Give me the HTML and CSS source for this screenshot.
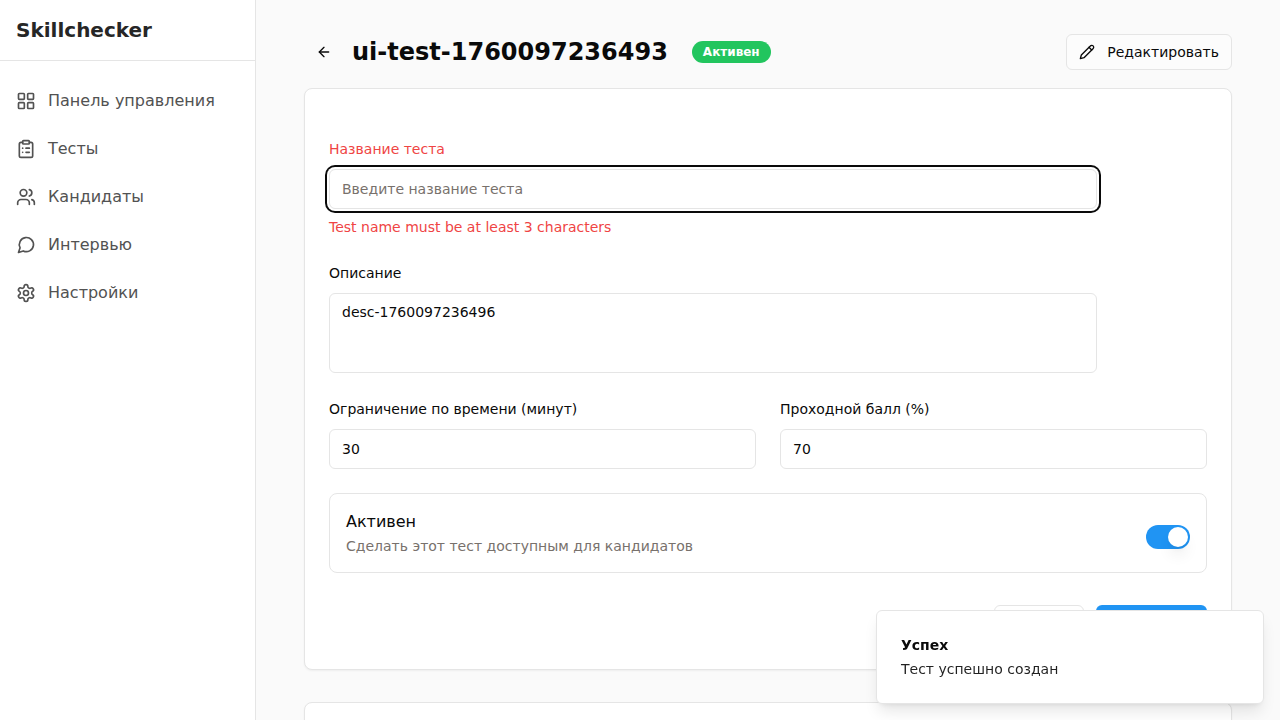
FILE: index.html
```html
<!DOCTYPE html>
<html lang="ru">
<head>
<meta charset="utf-8">
<meta name="viewport" content="width=device-width, initial-scale=1">
<title>Skillchecker</title>
<link rel="stylesheet" href="styles.css">
</head>
<body>
<div class="app">
  <aside class="sidebar">
    <div class="brand">Skillchecker</div>
    <nav class="nav">
      <a class="nav-link" href="#dashboard">
        <svg class="icon icon-md" viewBox="0 0 24 24" aria-hidden="true"><rect width="7" height="7" x="3" y="3" rx="1"/><rect width="7" height="7" x="14" y="3" rx="1"/><rect width="7" height="7" x="14" y="14" rx="1"/><rect width="7" height="7" x="3" y="14" rx="1"/></svg>
        <span>Панель управления</span>
      </a>
      <a class="nav-link" href="#tests">
        <svg class="icon icon-md" viewBox="0 0 24 24" aria-hidden="true"><rect width="8" height="4" x="8" y="2" rx="1" ry="1"/><path d="M16 4h2a2 2 0 0 1 2 2v14a2 2 0 0 1-2 2H6a2 2 0 0 1-2-2V6a2 2 0 0 1 2-2h2"/><path d="M12 11h4"/><path d="M12 16h4"/><path d="M8 11h.01"/><path d="M8 16h.01"/></svg>
        <span>Тесты</span>
      </a>
      <a class="nav-link" href="#candidates">
        <svg class="icon icon-md" viewBox="0 0 24 24" aria-hidden="true"><path d="M16 21v-2a4 4 0 0 0-4-4H6a4 4 0 0 0-4 4v2"/><circle cx="9" cy="7" r="4"/><path d="M22 21v-2a4 4 0 0 0-3-3.87"/><path d="M16 3.13a4 4 0 0 1 0 7.75"/></svg>
        <span>Кандидаты</span>
      </a>
      <a class="nav-link" href="#interviews">
        <svg class="icon icon-md" viewBox="0 0 24 24" aria-hidden="true"><path d="m3 21 1.9-5.7a8.5 8.5 0 1 1 3.8 3.8z"/></svg>
        <span>Интервью</span>
      </a>
      <a class="nav-link" href="#settings">
        <svg class="icon icon-md" viewBox="0 0 24 24" aria-hidden="true"><path d="M12.22 2h-.44a2 2 0 0 0-2 2v.18a2 2 0 0 1-1 1.73l-.43.25a2 2 0 0 1-2 0l-.15-.08a2 2 0 0 0-2.73.73l-.22.38a2 2 0 0 0 .73 2.73l.15.1a2 2 0 0 1 1 1.72v.51a2 2 0 0 1-1 1.74l-.15.09a2 2 0 0 0-.73 2.73l.22.38a2 2 0 0 0 2.73.73l.15-.08a2 2 0 0 1 2 0l.43.25a2 2 0 0 1 1 1.73V20a2 2 0 0 0 2 2h.44a2 2 0 0 0 2-2v-.18a2 2 0 0 1 1-1.73l.43-.25a2 2 0 0 1 2 0l.15.08a2 2 0 0 0 2.73-.73l.22-.39a2 2 0 0 0-.73-2.73l-.15-.08a2 2 0 0 1-1-1.74v-.5a2 2 0 0 1 1-1.74l.15-.09a2 2 0 0 0 .73-2.73l-.22-.38a2 2 0 0 0-2.73-.73l-.15.08a2 2 0 0 1-2 0l-.43-.25a2 2 0 0 1-1-1.73V4a2 2 0 0 0-2-2z"/><circle cx="12" cy="12" r="3"/></svg>
        <span>Настройки</span>
      </a>
    </nav>
  </aside>

  <main class="main">
    <header class="page-header">
      <div class="page-title">
        <button class="back" type="button" aria-label="Назад">
          <svg class="icon icon-sm" viewBox="0 0 24 24" aria-hidden="true"><path d="m12 19-7-7 7-7"/><path d="M19 12H5"/></svg>
        </button>
        <h1 class="title">ui-test-1760097236493</h1>
        <span class="badge">Активен</span>
      </div>
      <button class="button button-outline button-edit" type="button">
        <svg class="icon icon-sm" viewBox="0 0 24 24" aria-hidden="true"><path d="M17 3a2.85 2.83 0 1 1 4 4L7.5 20.5 2 22l1.5-5.5Z"/><path d="m15 5 4 4"/></svg>
        <span>Редактировать</span>
      </button>
    </header>

    <section class="card">
      <form class="form">
        <div class="field field-narrow">
          <label class="label label-error" for="name">Название теста</label>
          <input class="input input-active" id="name" type="text" placeholder="Введите название теста" aria-invalid="true" aria-describedby="name-error">
          <p class="error" id="name-error">Test name must be at least 3 characters</p>
        </div>
        <div class="field field-narrow">
          <label class="label" for="description">Описание</label>
          <textarea class="input textarea" id="description">desc-1760097236496</textarea>
        </div>
        <div class="field-row">
          <div class="field">
            <label class="label" for="time">Ограничение по времени (минут)</label>
            <input class="input" id="time" type="text" inputmode="numeric" value="30">
          </div>
          <div class="field">
            <label class="label" for="score">Проходной балл (%)</label>
            <input class="input" id="score" type="text" inputmode="numeric" value="70">
          </div>
        </div>
        <div class="option">
          <div class="option-text">
            <label class="option-title" for="active">Активен</label>
            <p class="option-note" id="active-note">Сделать этот тест доступным для кандидатов</p>
          </div>
          <div class="option-control">
            <input class="switch" id="active" type="checkbox" role="switch" aria-describedby="active-note" checked>
          </div>
        </div>
        <div class="actions">
          <button class="button button-outline button-white" type="button">Отмена</button>
          <button class="button button-primary" type="submit">Сохранить</button>
        </div>
      </form>
    </section>

    <section class="card card-next"></section>
  </main>
</div>

<div class="toast" role="status">
  <div class="toast-title">Успех</div>
  <div class="toast-text">Тест успешно создан</div>
</div>
</body>
</html>
```

FILE: styles.css
```css
:root {
  --ink: #0a0a0a;
  --border: #e5e5e5;
  --muted: #78716c;
  --red: #ef4444;
  --blue: #2094f3;
  --page: #fafafa;
}

*,
*::before {
  box-sizing: border-box;
}

body {
  margin: 0;
  font-family: "DejaVu Sans", sans-serif;
  font-size: 14px;
  line-height: 20px;
  color: var(--ink);
  background: var(--page);
}

h1,
p {
  margin: 0;
}

button,
input,
textarea {
  font: inherit;
  color: inherit;
}

.app {
  display: flex;
  height: 100vh;
}

.icon {
  flex: none;
  fill: none;
  stroke: currentColor;
  stroke-width: 2;
  stroke-linecap: round;
  stroke-linejoin: round;
}

.icon-sm {
  width: 16px;
  height: 16px;
}

.icon-md {
  width: 20px;
  height: 20px;
}

/* Sidebar */

.sidebar {
  flex: none;
  width: 256px;
  background: #fff;
  border-right: 1px solid var(--border);
}

.brand {
  padding: 16px;
  border-bottom: 1px solid var(--border);
  font-size: 20px;
  line-height: 28px;
  font-weight: 700;
  color: #262626;
}

.nav {
  padding: 16px 0;
}

.nav-link {
  display: flex;
  align-items: center;
  gap: 12px;
  padding: 12px 16px;
  font-size: 16px;
  line-height: 24px;
  color: #525252;
  text-decoration: none;
}

/* Page */

.main {
  flex: 1;
  min-width: 0;
  padding: 34px 48px;
  overflow-y: auto;
  scrollbar-width: none;
}

.page-header {
  display: flex;
  align-items: center;
  justify-content: space-between;
  margin-bottom: 18px;
}

.page-title {
  display: flex;
  align-items: center;
}

.back {
  display: flex;
  align-items: center;
  justify-content: center;
  width: 40px;
  height: 36px;
  padding: 0;
  border: 0;
  border-radius: 6px;
  background: none;
}

.title {
  margin: 0 24px 0 8px;
  font-size: 24px;
  line-height: 32px;
  font-weight: 700;
}

.badge {
  padding: 3px 11px;
  border-radius: 11px;
  background: #22c55e;
  color: #fff;
  font-size: 12px;
  line-height: 16px;
  font-weight: 700;
}

.button {
  display: flex;
  align-items: center;
  height: 40px;
  padding: 0 16px;
  border: 0;
  border-radius: 6px;
}

.button-outline {
  border: 1px solid var(--border);
  background: #fcfcfc;
}

.button-edit {
  gap: 12px;
  height: 36px;
  padding: 0 12px;
}

.button-white {
  background: #fff;
}

.button-primary {
  background: var(--blue);
  color: #fff;
}

/* Form card */

.card {
  padding: 48px 24px 24px;
  border: 1px solid var(--border);
  border-radius: 8px;
  background: #fff;
  box-shadow: 0 1px 2px rgb(0 0 0 / 5%);
}

.card-next {
  min-height: 240px;
  margin-top: 32px;
}

.form {
  display: grid;
  gap: 24px;
}

.field {
  display: grid;
  gap: 8px;
}

.field-narrow {
  max-width: 768px;
}

.field-row {
  display: grid;
  grid-template-columns: 1fr 1fr;
  gap: 24px;
}

.label {
  line-height: 24px;
}

.label-error,
.error {
  color: var(--red);
}

.input {
  width: 100%;
  height: 40px;
  padding: 8px 12px;
  border: 1px solid var(--border);
  border-radius: 6px;
  background: #fff;
  outline: none;
}

.input::placeholder {
  color: var(--muted);
}

.input:focus-visible,
.input-active {
  box-shadow: 0 0 0 2px #fff, 0 0 0 4px var(--ink);
}

.textarea {
  display: block;
  height: 80px;
  resize: none;
}

.option {
  display: flex;
  align-items: center;
  justify-content: space-between;
  padding: 16px;
  border: 1px solid var(--border);
  border-radius: 8px;
}

.option-text {
  display: grid;
  gap: 2px;
}

.option-title {
  font-size: 16px;
  line-height: 24px;
}

.option-note {
  color: var(--muted);
}

.option-control {
  display: flex;
  padding-top: 8px;
}

.switch {
  appearance: none;
  display: flex;
  width: 44px;
  height: 24px;
  margin: 0;
  padding: 2px;
  border-radius: 12px;
  background: #d4d4d4;
}

.switch::before {
  content: "";
  width: 20px;
  height: 20px;
  border-radius: 50%;
  background: #fff;
  box-shadow: 0 10px 15px -3px rgb(0 0 0 / 10%), 0 4px 6px -4px rgb(0 0 0 / 10%);
}

.switch:checked {
  justify-content: flex-end;
  background: var(--blue);
}

.actions {
  display: flex;
  justify-content: flex-end;
  gap: 12px;
  padding-top: 8px;
}

/* Notification */

.toast {
  position: fixed;
  right: 16px;
  bottom: 16px;
  display: grid;
  gap: 4px;
  width: 388px;
  padding: 24px;
  border: 1px solid var(--border);
  border-radius: 6px;
  background: #fff;
  box-shadow: 0 10px 15px -3px rgb(0 0 0 / 10%), 0 4px 6px -4px rgb(0 0 0 / 10%);
}

.toast-title {
  font-weight: 700;
}

.toast-text {
  opacity: 0.9;
}
```
